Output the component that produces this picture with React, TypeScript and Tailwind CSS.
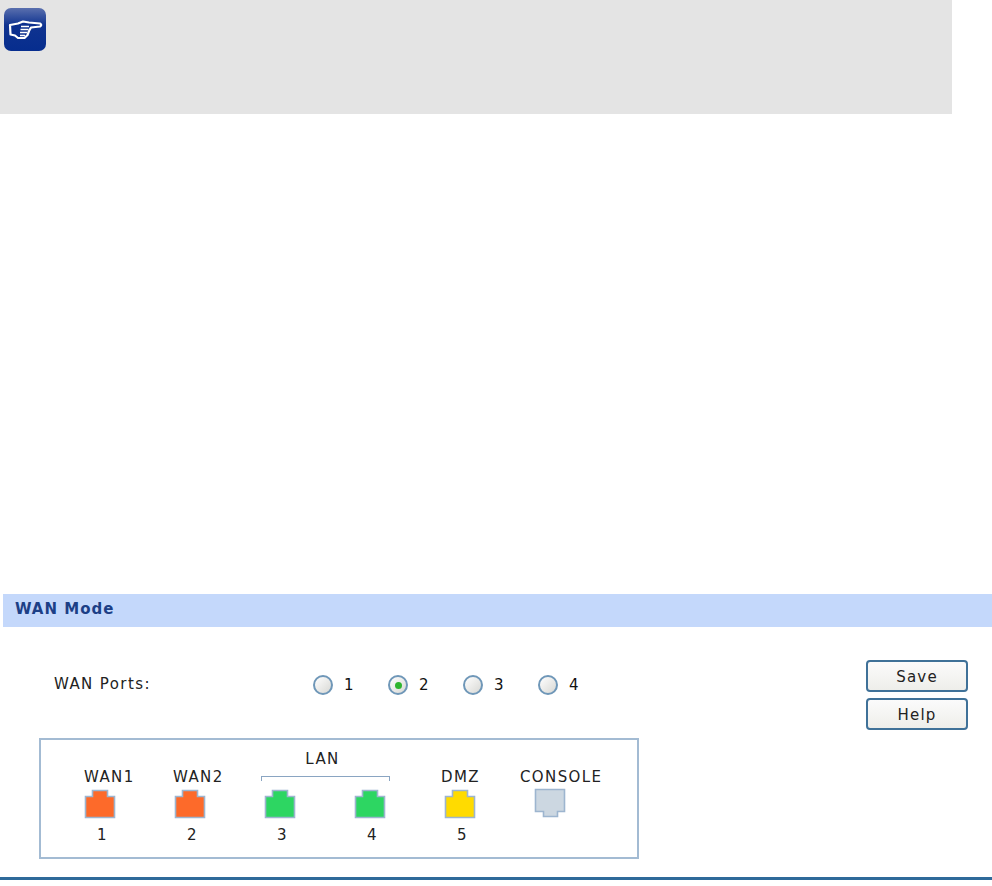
const font = { fontFamily: '"DejaVu Sans", Verdana, sans-serif' };

function Port({ fill, flip }: { fill: string; flip?: boolean }) {
  return (
    <svg width="32" height="30" viewBox="0 0 32 30" className="block">
      <path
        d={flip ? "M1.5 1.5H30.5V23.5H23.5V28.5H9.5V23.5H1.5Z" : "M8.5 1.5H23.5V7.5H30.5V28.5H1.5V7.5H8.5Z"}
        fill={fill}
        stroke="#9db5cf"
        strokeWidth="1.6"
      />
    </svg>
  );
}

function PortCol({ label, num, fill, labelLeft }: { label: string; num: string; fill: string; labelLeft: string }) {
  return (
    <div className="w-[90px] shrink-0">
      <div className={`h-[17px] leading-[17px] whitespace-nowrap ${labelLeft}`}>{label}</div>
      <div className="mt-[3px] h-[30px]"><Port fill={fill} /></div>
      <div className="mt-[8px] h-[17px] leading-[17px] w-[37px] text-center">{num}</div>
    </div>
  );
}

function Radio({ label, checked }: { label: string; checked?: boolean }) {
  return (
    <div className="w-[75px] shrink-0 flex items-center">
      <span className="w-[20px] h-[20px] rounded-full border-2 border-[#6f97b8] bg-gradient-to-br from-white to-[#d8d8d4] flex items-center justify-center">
        {checked && <span className="w-[7px] h-[7px] rounded-full bg-[#2fb52f]" />}
      </span>
      <span className="ml-[11px] text-[#111]">{label}</span>
    </div>
  );
}

function Btn({ label }: { label: string }) {
  return (
    <div className="w-[102px] h-[32px] rounded-[4px] border-2 border-[#3f7198] bg-gradient-to-b from-[#fbfbfb] to-[#eeeeea] text-center leading-[30px] text-[#222] tracking-[1.2px]">
      {label}
    </div>
  );
}

export default function App() {
  return (
    <div className="w-[992px] h-[886px] bg-white overflow-hidden text-[15px] text-[#222] tracking-[1.4px]" style={font}>
      <div className="w-[952px] h-[114px] bg-[#e4e4e4] pl-[4px] pt-[8px]">
        <svg width="42" height="43" viewBox="0 0 42 43" className="block">
          <defs>
            <linearGradient id="g" x1="0" y1="0" x2="0" y2="1">
              <stop offset="0" stopColor="#5a6fae" />
              <stop offset="0.4" stopColor="#0f3390" />
              <stop offset="1" stopColor="#062d8e" />
            </linearGradient>
          </defs>
          <rect width="42" height="43" rx="7" fill="url(#g)" />
          <path
            d="M6 17L14 15.5L19 13.5L25 14.5L36 15.5Q38.5 17 36 18.5L27 19.5L25 23L23.5 27L20.5 30H14L11 27.5L6.5 26.5Z"
            fill="#0b2f8e"
            stroke="#fff"
            strokeWidth="2.2"
            strokeLinejoin="round"
          />
          <path d="M17 18.5H25M16.5 21.5H24.5M16 24.5H23M16 27.5H21" stroke="#fff" strokeWidth="1.6" fill="none" />
        </svg>
      </div>

      <div className="mt-[480px] ml-[3px] h-[33px] bg-[#c4d8fb] pl-[12px] leading-[31px] text-[15px] font-bold text-[#1c3f86] tracking-[1px]">
        WAN Mode
      </div>

      <div className="flex mt-[33px] h-[70px]">
        <div className="pl-[54px] w-[313px] shrink-0 pt-[16px] leading-[17px]">WAN Ports:</div>
        <div className="flex w-[553px] shrink-0 pt-[14px] h-[36px] items-center">
          <Radio label="1" />
          <Radio label="2" checked />
          <Radio label="3" />
          <Radio label="4" />
        </div>
        <div className="flex flex-col gap-[6px]">
          <Btn label="Save" />
          <Btn label="Help" />
        </div>
      </div>

      <div className="relative ml-[39px] mt-[8px] w-[600px] h-[121px] border-2 border-[#a3bbd3] pl-[43px] pt-[29px] flex">
        <div className="absolute left-[220px] top-[36px] w-[129px] h-[5px] border-t border-x border-[#8aa5c2]" />
        <div className="absolute left-[217px] top-[11px] w-[129px] text-center h-[17px] leading-[17px]">LAN</div>
        <PortCol label="WAN1" num="1" fill="#fd6a2a" labelLeft="" />
        <PortCol label="WAN2" num="2" fill="#fd6a2a" labelLeft="-ml-[1px]" />
        <PortCol label="" num="3" fill="#2dd662" labelLeft="" />
        <PortCol label="" num="4" fill="#2dd662" labelLeft="" />
        <PortCol label="DMZ" num="5" fill="#ffdb00" labelLeft="-ml-[3px]" />
        <div className="w-[90px] shrink-0">
          <div className="h-[17px] leading-[17px] -ml-[14px] whitespace-nowrap">CONSOLE</div>
          <div className="mt-[2px]"><Port fill="#ccd7e1" flip /></div>
        </div>
      </div>

      <div className="mt-[18px] h-[3px] bg-[#2f6a9a]" />
    </div>
  );
}
